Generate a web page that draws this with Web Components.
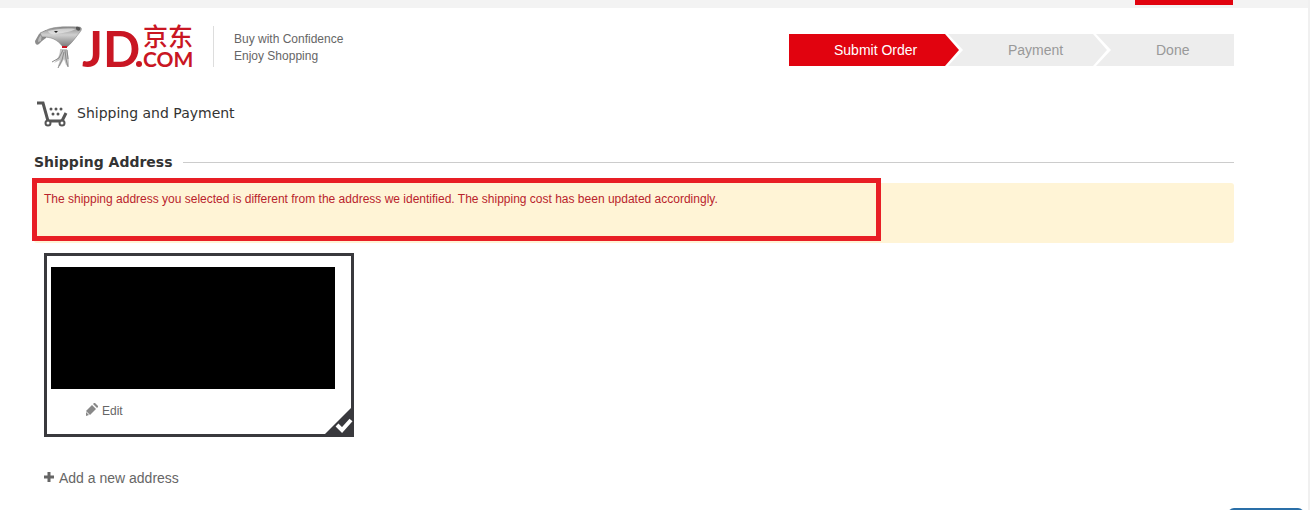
<!DOCTYPE html>
<html lang="en">
<head>
<meta charset="utf-8">
<meta name="viewport" content="width=device-width, initial-scale=1">
<title>Shipping and Payment</title>
<style>
    html, body {
        margin: 0;
        min-height: 100vh;
    }
    body {
        background: #fff;
        color: #666;
        font: 14px/20px "Liberation Sans", Arial, "Noto Sans CJK SC", sans-serif;
        overflow: hidden;
    }
</style>
</head>
<body>
<checkout-page>
    <site-header slot="header">
        <jd-logo></jd-logo>
        <span slot="slogan">Buy with Confidence<br>Enjoy Shopping</span>
        <order-steps slot="steps">
            <order-step state="active">Submit Order</order-step>
            <order-step>Payment</order-step>
            <order-step last>Done</order-step>
        </order-steps>
    </site-header>
    <page-title>Shipping and Payment</page-title>
    <section-heading>Shipping Address</section-heading>
    <notice-bar>The shipping address you selected is different from the address we identified. The shipping cost has been updated accordingly.</notice-bar>
    <address-card></address-card>
    <add-link>Add a new address</add-link>
</checkout-page>
<chat-tab></chat-tab>

<script>
class CheckoutPage extends HTMLElement {
    connectedCallback() {
        this.attachShadow({ mode: 'open' });
        this.shadowRoot.innerHTML = `
            <style>
                :host {
                    display: block;
                    min-height: 100vh;
                    box-sizing: border-box;
                    border-right: 2px solid #f0f0f0;
                }
                .topbar {
                    display: flex;
                    justify-content: flex-end;
                    height: 8px;
                    padding-right: 75px;
                    background: #f3f3f3;
                }
                .tab {
                    width: 98px;
                    height: 5px;
                    background: #e1030f;
                }
                main {
                    padding: 0 74px 0 34px;
                }
            </style>
            <div class="topbar"><div class="tab"></div></div>
            <main>
                <slot name="header"></slot>
                <slot></slot>
            </main>
        `;
    }
}

class SiteHeader extends HTMLElement {
    connectedCallback() {
        this.attachShadow({ mode: 'open' });
        this.shadowRoot.innerHTML = `
            <style>
                :host {
                    display: block;
                }
                header {
                    display: flex;
                    align-items: flex-start;
                }
                .slogan {
                    margin: 18px 0 0 17px;
                    padding: 5px 0 2px 20px;
                    border-left: 1px solid #ddd;
                    font-size: 12px;
                    line-height: 17px;
                }
                .steps {
                    margin: 26px 0 0 auto;
                }
            </style>
            <header>
                <slot></slot>
                <div class="slogan"><slot name="slogan"></slot></div>
                <div class="steps"><slot name="steps"></slot></div>
            </header>
        `;
    }
}

class JdLogo extends HTMLElement {
    connectedCallback() {
        this.attachShadow({ mode: 'open' });
        this.shadowRoot.innerHTML = `
            <style>
                :host {
                    display: block;
                }
                a, svg {
                    display: block;
                }
            </style>
            <a href="#" aria-label="JD.COM">
            <svg width="162" height="76" viewBox="0 -16 162 76">
                <defs>
                    <linearGradient id="body" x1="0" y1="0" x2="0" y2="1">
                        <stop offset="0" stop-color="#8a8a8a"/>
                        <stop offset=".4" stop-color="#d0d0d0"/>
                        <stop offset="1" stop-color="#777"/>
                    </linearGradient>
                </defs>
                <!-- dog: ear, head, nose, legs, collar -->
                <path d="M12 6L5 10 1 17c0 3 2 5 4 3l3-3 4-3z" fill="#8c8c8c"/>
                <path d="M4 18c0-4 2-6 4-8l-1 7z" fill="#bbb"/>
                <path d="M6 9l9-4C25 2 35 3 45 3c3 0 3 3 1 5-4 5-8 11-13 15h-4C23 15 17 13 8 13z" fill="url(#body)" stroke="#777" stroke-width=".5"/>
                <path d="M14 7c8-2 18-3 28-2-6 3-14 4-19 5-4 1-8 0-9-3z" fill="#eee" opacity=".6"/>
                <path d="M42 3c3-1 5 1 4 3-1 1-3 1-4-1z" fill="#555"/>
                <path d="M20 7h4l-2 2z" fill="#222"/>
                <path d="M28 25h5c1 4 2 9 2 18l-3-2-2-6-4 7h-2l2-6-6 3c4-5 6-8 6-14z" fill="#c4c4c4"/>
                <path d="M29 26l-4 8-7 4M31 26l1 9 2 8M30 28l-2 8-4 8M33 26l1 9" fill="none" stroke="#888"/>
                <path d="M28 22h5v2h-5z" fill="#c91623"/>
                <g fill="#c91623">
                    <text x="48" y="43" font-family="Lato, sans-serif" font-size="49" font-weight="700">JD</text>
                    <text x="109" y="22" font-family="Noto Sans CJK SC, sans-serif" font-size="25" font-weight="500">京东</text>
                    <text x="109" y="43" font-family="Lato, sans-serif" font-size="21" font-weight="700">COM</text>
                    <circle cx="105" cy="40" r="3"/>
                </g>
            </svg>
            </a>
        `;
    }
}

class OrderSteps extends HTMLElement {
    connectedCallback() {
        this.attachShadow({ mode: 'open' });
        this.shadowRoot.innerHTML = `
            <style>
                :host {
                    display: block;
                }
                nav {
                    display: grid;
                    grid-template-columns: 156px 148px 141px;
                    background: #ededed;
                }
            </style>
            <nav aria-label="Order progress"><slot></slot></nav>
        `;
    }
}

class OrderStep extends HTMLElement {
    connectedCallback() {
        this.attachShadow({ mode: 'open' });
        this.shadowRoot.innerHTML = `
            <style>
                :host {
                    display: block;
                    position: relative;
                    padding-left: 63px;
                    background: #ededed;
                    color: #999;
                    line-height: 32px;
                    --step: #ededed;
                }
                :host([state="active"]) {
                    padding-left: 45px;
                    background: #e1030f;
                    color: #fff;
                    --step: #e1030f;
                }
                /* white arrow first, the step's own colour on top of it */
                .edge, .tip {
                    position: absolute;
                    z-index: 1;
                    top: 0;
                    left: 100%;
                    width: 18px;
                    height: 32px;
                    background: #fff;
                    clip-path: polygon(0 0, 3px 0, 100% 50%, 3px 100%, 0 100%);
                }
                .tip {
                    width: 14px;
                    background: var(--step);
                    clip-path: polygon(0 0, 100% 50%, 0 100%);
                }
                :host([last]) .edge, :host([last]) .tip {
                    display: none;
                }
            </style>
            <slot></slot>
            <div class="edge"></div>
            <div class="tip"></div>
        `;
    }
}

class PageTitle extends HTMLElement {
    connectedCallback() {
        this.attachShadow({ mode: 'open' });
        this.shadowRoot.innerHTML = `
            <style>
                :host {
                    display: block;
                    padding-top: 15px;
                }
                h1 {
                    display: flex;
                    align-items: center;
                    gap: 9px;
                    margin: 0;
                    padding-left: 2px;
                    color: #333;
                    font: 14px/28px "DejaVu Sans", Verdana, sans-serif;
                }
            </style>
            <h1>
                <svg width="32" height="28" viewBox="0 0 32 28" fill="none" stroke="#555" stroke-width="3">
                    <path d="M1 4h6l5 18h14l4-8"/>
                    <circle cx="12" cy="24" r="2.5" fill="#fff" stroke-width="2"/>
                    <circle cx="26" cy="24" r="2.5" fill="#fff" stroke-width="2"/>
                    <g fill="#555" stroke="none">
                        <circle cx="15" cy="10" r="1.5"/>
                        <circle cx="20" cy="10" r="1.5"/>
                        <circle cx="25" cy="10" r="1.5"/>
                        <circle cx="17" cy="15" r="1.5"/>
                        <circle cx="22" cy="15" r="1.5"/>
                    </g>
                </svg>
                <slot></slot>
            </h1>
        `;
    }
}

class SectionHeading extends HTMLElement {
    connectedCallback() {
        this.attachShadow({ mode: 'open' });
        this.shadowRoot.innerHTML = `
            <style>
                :host {
                    display: block;
                    padding: 25px 0 11px;
                }
                h2 {
                    display: flex;
                    align-items: center;
                    gap: 10px;
                    margin: 0;
                    color: #333;
                    font: bold 14px/20px "DejaVu Sans", Verdana, sans-serif;
                }
                h2::after {
                    content: "";
                    flex: 1;
                    height: 1px;
                    background: #ccc;
                }
            </style>
            <h2><slot></slot></h2>
        `;
    }
}

class NoticeBar extends HTMLElement {
    connectedCallback() {
        this.attachShadow({ mode: 'open' });
        this.shadowRoot.innerHTML = `
            <style>
                :host {
                    display: block;
                    position: relative;
                }
                p {
                    margin: 0;
                    padding: 6px 10px 34px;
                    border-radius: 3px;
                    background: #fff4d6;
                    color: #b9232c;
                    font-size: 12px;
                    line-height: 20px;
                }
                .frame {
                    position: absolute;
                    inset: -5px auto 2px -2px;
                    width: 849px;
                    max-width: 100%;
                    box-sizing: border-box;
                    border: 5px solid #e81e25;
                }
            </style>
            <p role="alert"><slot></slot></p>
            <div class="frame"></div>
        `;
    }
}

class AddressCard extends HTMLElement {
    connectedCallback() {
        this.attachShadow({ mode: 'open' });
        this.shadowRoot.innerHTML = `
            <style>
                :host {
                    display: block;
                    position: relative;
                    box-sizing: border-box;
                    width: 310px;
                    margin: 10px 0 0 10px;
                    padding: 11px 16px 13px 4px;
                    border: 3px solid #39393d;
                }
                .details {
                    height: 122px;
                    background: #000;
                }
                a {
                    display: inline-flex;
                    align-items: center;
                    gap: 4px;
                    margin: 12px 0 0 34px;
                    color: #666;
                    font-size: 12px;
                    line-height: 20px;
                    text-decoration: none;
                }
                a svg {
                    margin-bottom: 4px;
                }
                .check {
                    position: absolute;
                    right: -3px;
                    bottom: -3px;
                }
            </style>
            <div class="details"></div>
            <a href="#">
                <svg width="13" height="13" viewBox="0 0 13 13" fill="#888">
                    <path d="M7 2l4 4-6 6-4-4z"/>
                    <path d="M8 1l1-1h1l3 3v1l-1 1z"/>
                    <path d="M1 9l3 3-3 1z"/>
                </svg>
                <span>Edit</span>
            </a>
            <svg class="check" width="32" height="32" viewBox="0 0 32 32">
                <path d="M32 0v32H0z" fill="#39393d"/>
                <path d="M15 20l5 5 9-10" fill="none" stroke="#fff" stroke-width="4"/>
            </svg>
        `;
    }
}

class AddLink extends HTMLElement {
    connectedCallback() {
        this.attachShadow({ mode: 'open' });
        this.shadowRoot.innerHTML = `
            <style>
                :host {
                    display: block;
                    padding: 30px 0 0 10px;
                }
                a {
                    display: inline-flex;
                    align-items: center;
                    gap: 5px;
                    color: #666;
                    text-decoration: none;
                }
                svg {
                    margin-bottom: 2px;
                }
            </style>
            <a href="#">
                <svg width="10" height="10" viewBox="0 0 10 10" stroke="#666" stroke-width="3">
                    <path d="M5 0v10M0 5h10"/>
                </svg>
                <slot></slot>
            </a>
        `;
    }
}

class ChatTab extends HTMLElement {
    connectedCallback() {
        this.attachShadow({ mode: 'open' });
        this.shadowRoot.innerHTML = `
            <style>
                :host {
                    position: fixed;
                    right: 6px;
                    bottom: -28px;
                }
                button {
                    display: block;
                    width: 76px;
                    height: 30px;
                    border: 0;
                    border-radius: 6px;
                    background: #2a6fa8;
                }
            </style>
            <button type="button" aria-label="Chat"></button>
        `;
    }
}

customElements.define('checkout-page', CheckoutPage);
customElements.define('site-header', SiteHeader);
customElements.define('jd-logo', JdLogo);
customElements.define('order-steps', OrderSteps);
customElements.define('order-step', OrderStep);
customElements.define('page-title', PageTitle);
customElements.define('section-heading', SectionHeading);
customElements.define('notice-bar', NoticeBar);
customElements.define('address-card', AddressCard);
customElements.define('add-link', AddLink);
customElements.define('chat-tab', ChatTab);
</script>
</body>
</html>
